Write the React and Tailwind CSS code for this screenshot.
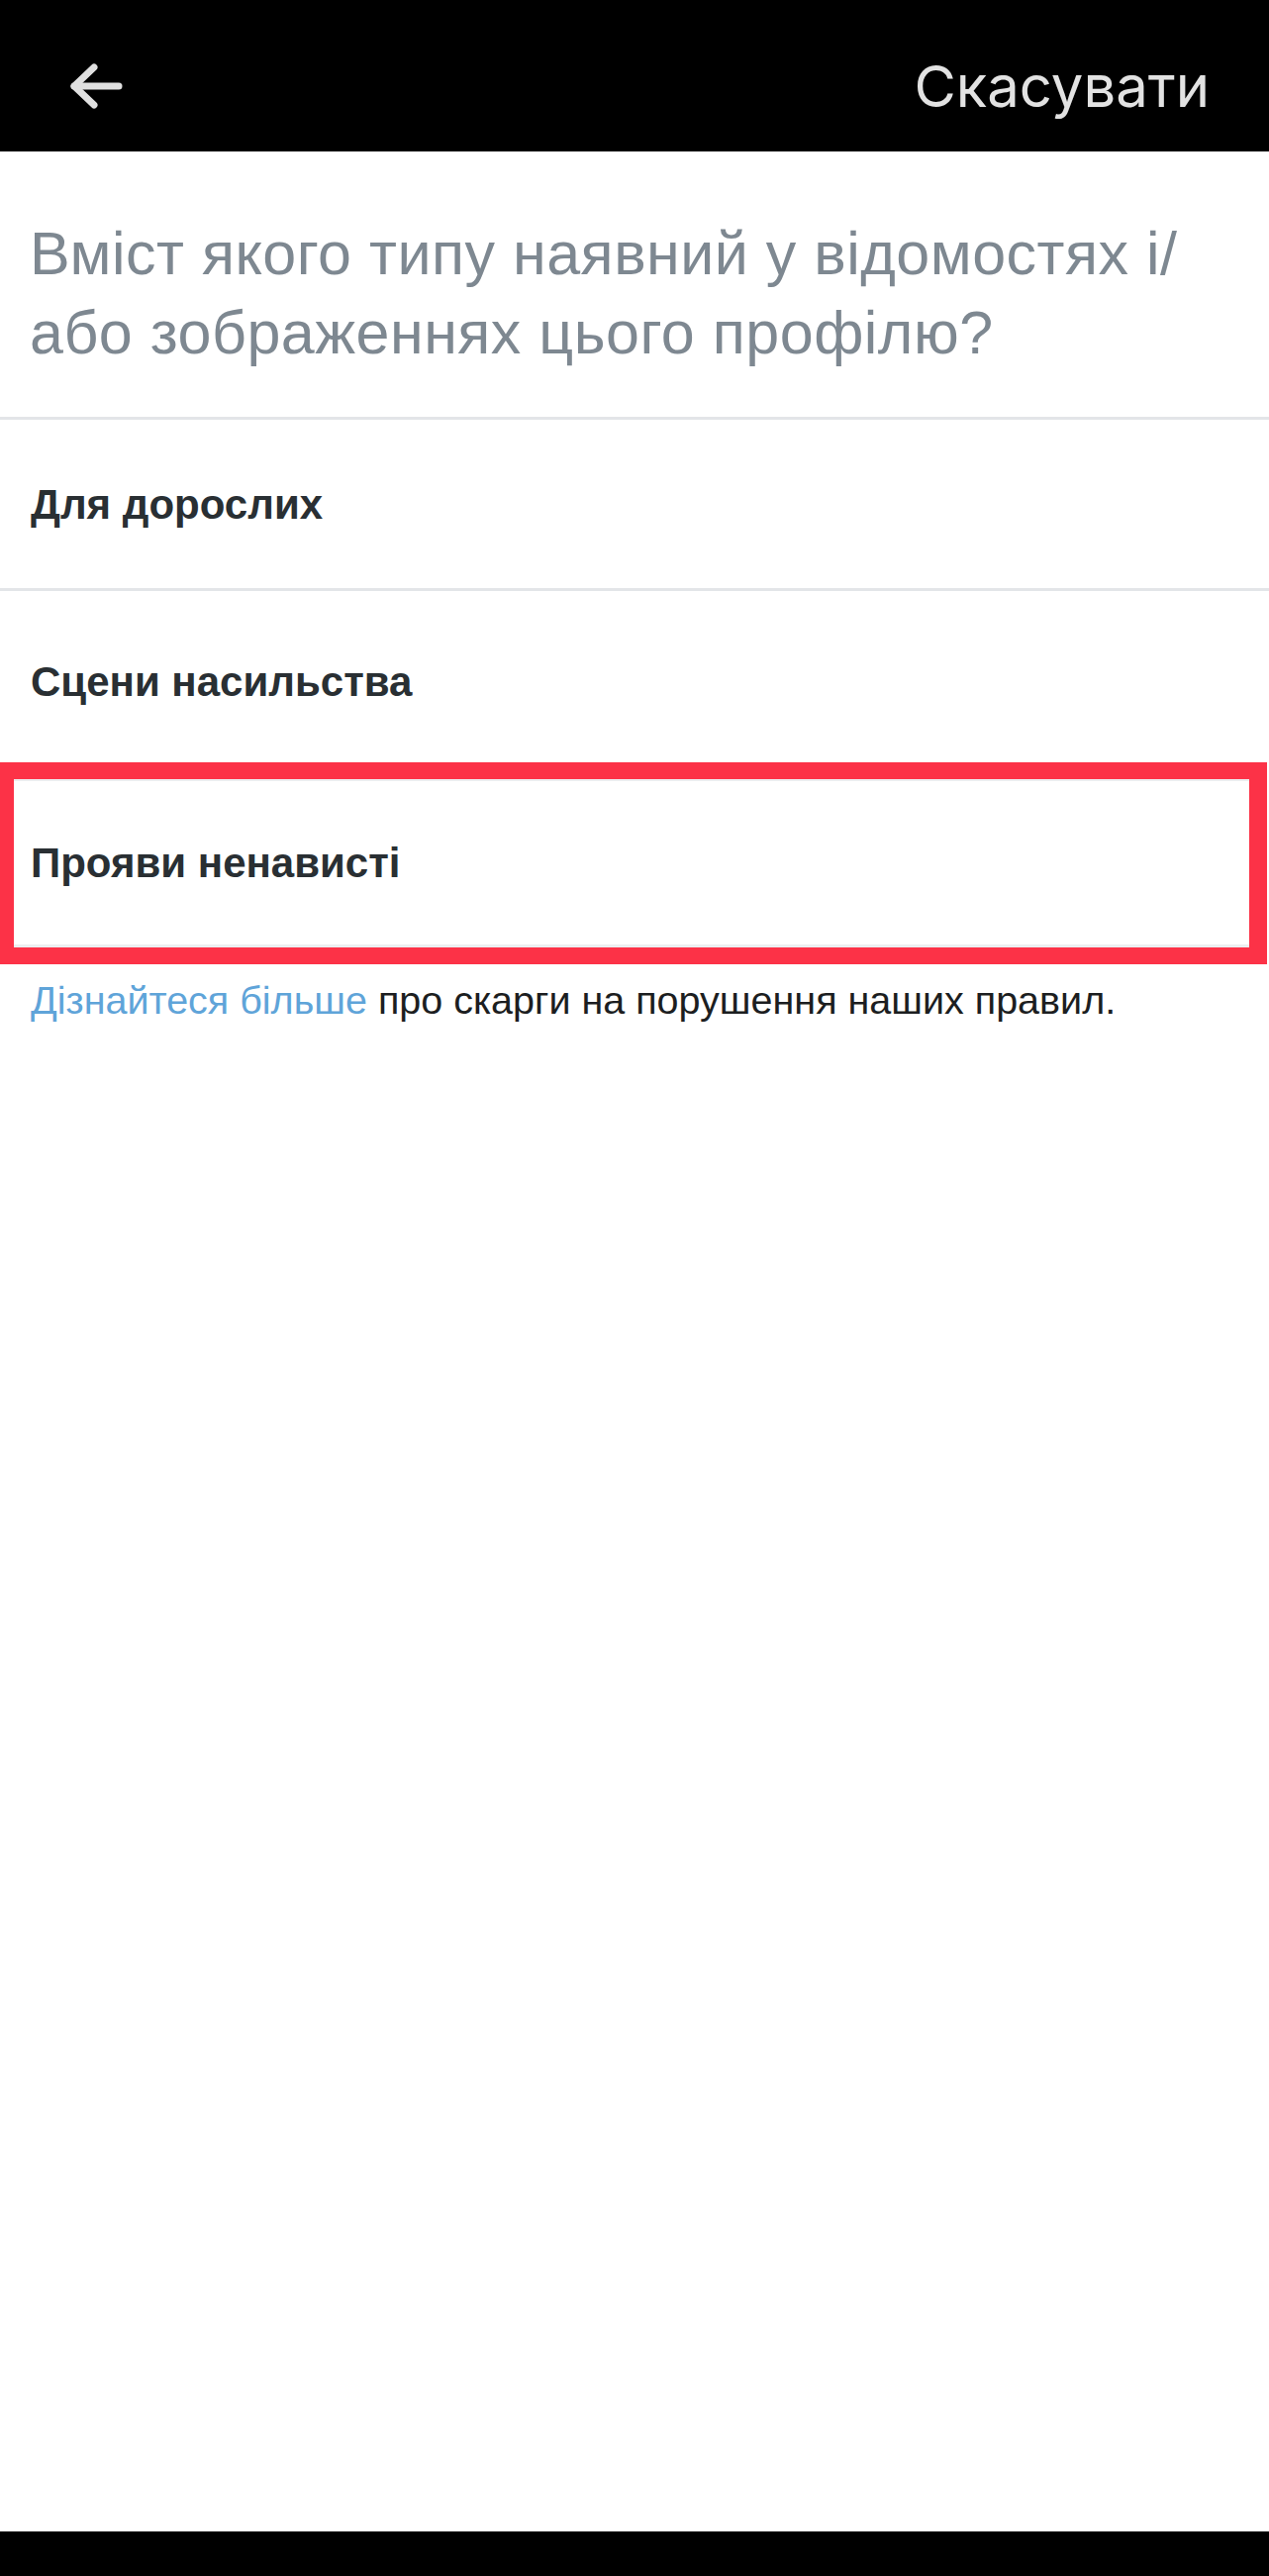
import React from "react";

const categories = ["Для дорослих", "Сцени насильства"];

const BackArrow = () => (
  <svg width="60" height="52" viewBox="0 0 60 52" fill="none" stroke="#e0e0e0" strokeWidth="7" strokeLinecap="round" strokeLinejoin="round">
    <path d="M27 7 7 26l20 19" />
    <path d="M7 26h45" />
  </svg>
);

const App = () => {
  return (
    <div className="min-h-[2602px] flex flex-col bg-white font-['Liberation_Sans',Arial,sans-serif]">
      {/* Top bar */}
      <header className="h-[153px] bg-black flex items-center justify-between pt-[21px] pl-[68px] pr-[60px]">
        <button className="flex items-center">
          <BackArrow />
        </button>
        <span className="font-['Inter',sans-serif] text-[58px] leading-none text-[#e2e2e2]">Скасувати</span>
      </header>

      {/* Question */}
      <div className="pt-[63px] pb-[45px] pl-[30px] pr-[20px] border-b-[3px] border-[#e3e5e8]">
        <h1 className="text-[61px] leading-[80px] tracking-[0.5px] text-[#7e8891] font-normal whitespace-nowrap">
          Вміст якого типу наявний у відомостях і/
          <br />
          або зображеннях цього профілю?
        </h1>
      </div>

      {/* Options */}
      {categories.map((label, i) => (
        <div
          key={label}
          className={`h-[173px] flex items-center pl-[31px] ${i === 0 ? "border-b-[3px] border-[#e3e5e8]" : "pt-[9px]"}`}
        >
          <span className="text-[42px] font-bold text-[#292f33]">{label}</span>
        </div>
      ))}

      {/* Highlighted option */}
      <div className="mr-[2px] border-t-[17px] border-b-[17px] border-l-[14px] border-r-[18px] border-[#fc3247]">
        <div className="h-[170px] flex items-center pl-[17px] border-t-2 border-b-[3px] border-[#eceef0]">
          <span className="text-[42px] font-bold text-[#292f33]">Прояви ненависті</span>
        </div>
      </div>

      <p className="pt-[12px] pl-[31px] text-[39.5px] leading-[48px] text-[#1c1e21]">
        <a href="#" className="text-[#5fa4d9]">Дізнайтеся більше</a> про скарги на порушення наших правил.
      </p>

      <div className="flex-1" />
      <div className="h-[45px] bg-black" />
    </div>
  );
};

export default App;
